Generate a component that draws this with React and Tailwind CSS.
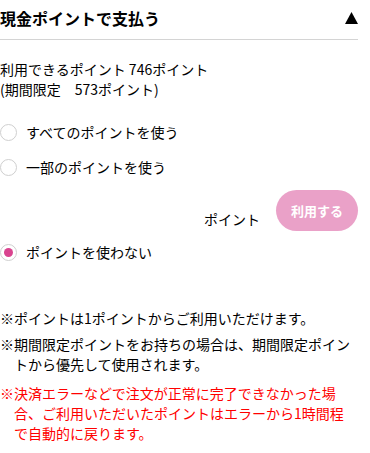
import React from "react";

function Radio({ checked, label }) {
  return (
    <div className="flex items-center h-[20px]">
      <span className="w-[17px] h-[17px] rounded-full border border-[#cfcfcf] bg-white flex items-center justify-center shrink-0">
        {checked && <span className="w-[9px] h-[9px] rounded-full bg-[#d9448f]" />}
      </span>
      <span className="ml-[9px] text-[14px] leading-[20px] text-black">{label}</span>
    </div>
  );
}

export default function App() {
  return (
    <div
      className="w-[370px] h-[453px] bg-white overflow-hidden"
      style={{ fontFamily: '"Noto Sans CJK JP", "Noto Sans", sans-serif' }}
    >
      <div className="w-[358px]">
        <div className="h-[40px] flex items-center justify-between border-b border-[#d4d4d4] pb-[4px]">
          <span className="text-[16px] font-bold text-black leading-[20px]">現金ポイントで支払う</span>
          <svg width="13" height="12" viewBox="0 0 13 12" className="mt-[1px]">
            <polygon points="6.5,0 13,12 0,12" fill="#000" />
          </svg>
        </div>

        <div className="mt-[19px] text-[14px] leading-[20px] text-black">
          <div>利用できるポイント 746ポイント</div>
          <div>(期間限定　573ポイント)</div>
        </div>

        <div className="mt-[23px]">
          <Radio label="すべてのポイントを使う" />
        </div>
        <div className="mt-[15px]">
          <Radio label="一部のポイントを使う" />
        </div>

        <div className="mt-[13px] flex items-end justify-end">
          <span className="text-[14px] leading-[20px] text-black mb-[2px]">ポイント</span>
          <button className="ml-[16px] w-[82px] h-[41px] rounded-full bg-[#eaa1c8] text-white text-[13px] font-bold flex items-center justify-center">
            利用する
          </button>
        </div>

        <div className="mt-[11px]">
          <Radio checked label="ポイントを使わない" />
        </div>

        <div className="mt-[46px] text-[14px] leading-[20px] text-black">
          <p className="pl-[14px] -indent-[14px]">※ポイントは1ポイントからご利用いただけます。</p>
          <p className="mt-[6px] pl-[14px] -indent-[14px]">
            ※期間限定ポイントをお持ちの場合は、期間限定ポイントから優先して使用されます。
          </p>
          <p className="mt-[9px] pl-[14px] pr-[5px] -indent-[14px] text-[#ff0000]">
            ※決済エラーなどで注文が正常に完了できなかった場合、ご利用いただいたポイントはエラーから1時間程で自動的に戻ります。
          </p>
        </div>
      </div>
    </div>
  );
}
